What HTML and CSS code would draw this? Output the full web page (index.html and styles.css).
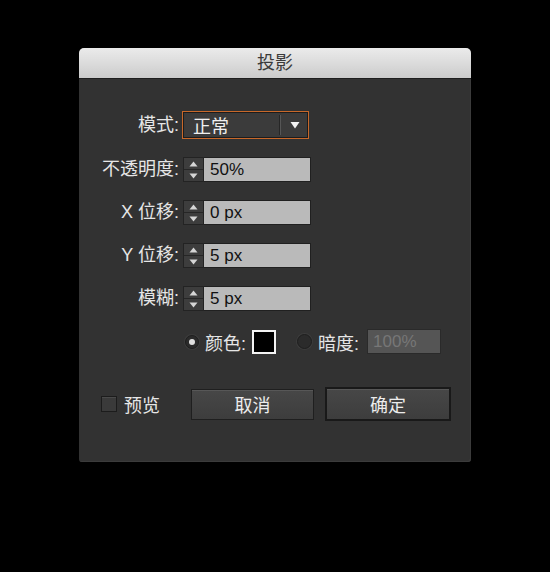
FILE: index.html
```html
<!DOCTYPE html>
<html lang="zh-CN">
<head>
<meta charset="utf-8">
<title>投影</title>
<link rel="stylesheet" href="styles.css">
</head>
<body>
<div class="dialog">
  <div class="titlebar">投影</div>
  <div class="content">
    <div class="form">
      <div class="row">
        <span class="label">模式:</span>
        <div class="select">
          <span class="select-text">正常</span>
          <span class="select-sep"></span>
          <svg class="select-arrow" width="10" height="8" viewBox="0 0 10 8"><path d="M0.5 1 L9.5 1 L5 7.5 Z" fill="#f2f2f2"/></svg>
        </div>
      </div>
      <div class="row">
        <span class="label">不透明度:</span>
        <div class="spin-group">
          <div class="spinner">
            <div class="spin-half"><svg width="9" height="6" viewBox="0 0 9 6"><path d="M0.5 5.5 L8.5 5.5 L4.5 0.5 Z" fill="#d6d6d6"/></svg></div>
            <div class="spin-half"><svg width="9" height="6" viewBox="0 0 9 6"><path d="M0.5 0.5 L8.5 0.5 L4.5 5.5 Z" fill="#d6d6d6"/></svg></div>
          </div>
          <div class="field">50%</div>
        </div>
      </div>
      <div class="row">
        <span class="label">X 位移:</span>
        <div class="spin-group">
          <div class="spinner">
            <div class="spin-half"><svg width="9" height="6" viewBox="0 0 9 6"><path d="M0.5 5.5 L8.5 5.5 L4.5 0.5 Z" fill="#d6d6d6"/></svg></div>
            <div class="spin-half"><svg width="9" height="6" viewBox="0 0 9 6"><path d="M0.5 0.5 L8.5 0.5 L4.5 5.5 Z" fill="#d6d6d6"/></svg></div>
          </div>
          <div class="field">0 px</div>
        </div>
      </div>
      <div class="row">
        <span class="label">Y 位移:</span>
        <div class="spin-group">
          <div class="spinner">
            <div class="spin-half"><svg width="9" height="6" viewBox="0 0 9 6"><path d="M0.5 5.5 L8.5 5.5 L4.5 0.5 Z" fill="#d6d6d6"/></svg></div>
            <div class="spin-half"><svg width="9" height="6" viewBox="0 0 9 6"><path d="M0.5 0.5 L8.5 0.5 L4.5 5.5 Z" fill="#d6d6d6"/></svg></div>
          </div>
          <div class="field">5 px</div>
        </div>
      </div>
      <div class="row">
        <span class="label">模糊:</span>
        <div class="spin-group">
          <div class="spinner">
            <div class="spin-half"><svg width="9" height="6" viewBox="0 0 9 6"><path d="M0.5 5.5 L8.5 5.5 L4.5 0.5 Z" fill="#d6d6d6"/></svg></div>
            <div class="spin-half"><svg width="9" height="6" viewBox="0 0 9 6"><path d="M0.5 0.5 L8.5 0.5 L4.5 5.5 Z" fill="#d6d6d6"/></svg></div>
          </div>
          <div class="field">5 px</div>
        </div>
      </div>
      <div class="row color-row">
        <span class="radio checked"><span class="dot"></span></span>
        <span class="opt-label">颜色:</span>
        <span class="swatch"></span>
        <span class="radio second"></span>
        <span class="opt-label">暗度:</span>
        <div class="field disabled">100%</div>
      </div>
    </div>
    <div class="actions">
      <label class="preview"><span class="checkbox"></span><span class="preview-text">预览</span></label>
      <button class="btn cancel">取消</button>
      <button class="btn ok">确定</button>
    </div>
  </div>
</div>
</body>
</html>
```

FILE: styles.css
```css
html, body {
  margin: 0;
  padding: 0;
  background: #000;
}
body {
  width: 550px;
  height: 572px;
  font-family: "Liberation Sans", "Noto Sans CJK SC", sans-serif;
  overflow: hidden;
}
.dialog {
  margin: 48px 0 0 79px;
  width: 392px;
  height: 414px;
  background: #323232;
  border-radius: 5px 5px 3px 3px;
  box-shadow: inset -1px -1px 0 #3b3b3b;
  overflow: hidden;
}
.titlebar {
  height: 30px;
  line-height: 30px;
  text-align: center;
  font-size: 18px;
  color: #3a3a3a;
  background: linear-gradient(#ebebeb, #dadada 55%, #cbcbcb);
  border-bottom: 1px solid #1e1e1e;
}
.content {
  padding-top: 32px;
}
.form {
  display: flex;
  flex-direction: column;
  gap: 18px;
}
.row {
  display: flex;
  align-items: center;
  height: 25px;
  gap: 3px;
}
.row:first-child {
  height: 28px;
}
.label {
  width: 100px;
  text-align: right;
  font-size: 18px;
  color: #e6e6e6;
  line-height: 25px;
}
.select {
  box-sizing: border-box;
  width: 127px;
  height: 28px;
  border: 1px solid #c8682a;
  box-shadow: inset 0 0 0 1px #1c1c1c;
  background: #3b3b3b;
  display: flex;
  align-items: center;
}
.select-text {
  flex: 1;
  padding-left: 10px;
  font-size: 18px;
  color: #f0f0f0;
}
.select-sep {
  width: 1px;
  height: 20px;
  background: #565656;
  box-shadow: -1px 0 0 #262626;
}
.select-arrow {
  margin: 0 8px 0 9px;
}
.spin-group {
  display: flex;
  margin-left: 1px;
}
.spinner {
  box-sizing: border-box;
  width: 21px;
  height: 25px;
  background: #3d3d3d;
  border: 1px solid #232323;
  display: flex;
  flex-direction: column;
}
.spin-half {
  flex: 1;
  display: flex;
  align-items: center;
  justify-content: center;
}
.spin-half:first-child {
  border-bottom: 1px solid #262626;
}
.field {
  box-sizing: border-box;
  width: 107px;
  height: 25px;
  background: #bababa;
  border: 1px solid #202020;
  border-left: none;
  padding-left: 6px;
  font-size: 17px;
  line-height: 23px;
  color: #111;
}
.color-row {
  padding-left: 106px;
  gap: 0;
}
.radio {
  box-sizing: border-box;
  width: 14px;
  height: 14px;
  border-radius: 50%;
  background: #2b2b2b;
  border: 1px solid #1e1e1e;
  box-shadow: 0 0 0 1px #3c3c3c;
  display: flex;
  align-items: center;
  justify-content: center;
}
.radio.checked {
  margin-right: 6px;
}
.dot {
  width: 6px;
  height: 6px;
  border-radius: 50%;
  background: #e0e0e0;
}
.radio.second {
  width: 15px;
  height: 15px;
  margin-left: 21px;
  margin-right: 6px;
}
.opt-label {
  font-size: 18px;
  color: #e6e6e6;
}
.swatch {
  box-sizing: border-box;
  width: 24px;
  height: 24px;
  margin-left: 6px;
  background: #000;
  border: 2px solid #f4f4f4;
}
.field.disabled {
  width: 74px;
  margin-left: 8px;
  background: #555;
  border: 1px solid #2a2a2a;
  color: #777;
  padding-left: 5px;
}
.actions {
  display: flex;
  align-items: center;
  margin-top: 33px;
  padding-left: 22px;
}
.preview {
  display: flex;
  align-items: center;
}
.checkbox {
  box-sizing: border-box;
  width: 16px;
  height: 16px;
  background: #3a3a3a;
  border: 1px solid #1c1c1c;
  box-shadow: inset 0 1px 0 #4a4a4a;
}
.preview-text {
  margin-left: 7px;
  font-size: 18px;
  color: #e6e6e6;
}
.btn {
  box-sizing: border-box;
  font-family: "Liberation Sans", "Noto Sans CJK SC", sans-serif;
  font-size: 18px;
  color: #ececec;
  background: linear-gradient(#474747, #3d3d3d);
  border: 1px solid #1f1f1f;
  box-shadow: inset 0 1px 0 #575757;
  padding: 0;
}
.cancel {
  width: 123px;
  height: 31px;
  margin-left: 31px;
}
.ok {
  width: 126px;
  height: 34px;
  margin-left: 11px;
  border: 2px solid #191919;
}
```
